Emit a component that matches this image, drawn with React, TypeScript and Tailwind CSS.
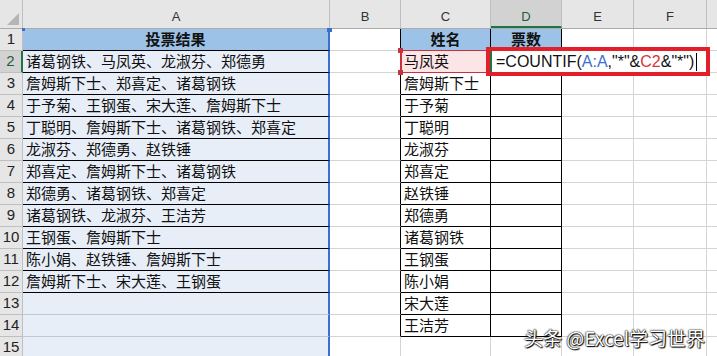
import React from 'react';

const votes = [
  '诸葛钢铁、马凤英、龙淑芬、郑德勇',
  '詹姆斯下士、郑喜定、诸葛钢铁',
  '于予菊、王钢蛋、宋大莲、詹姆斯下士',
  '丁聪明、詹姆斯下士、诸葛钢铁、郑喜定',
  '龙淑芬、郑德勇、赵铁锤',
  '郑喜定、詹姆斯下士、诸葛钢铁',
  '郑德勇、诸葛钢铁、郑喜定',
  '诸葛钢铁、龙淑芬、王洁芳',
  '王钢蛋、詹姆斯下士',
  '陈小娟、赵铁锤、詹姆斯下士',
  '詹姆斯下士、宋大莲、王钢蛋',
];

const names = [
  '马凤英', '詹姆斯下士', '于予菊', '丁聪明', '龙淑芬', '郑喜定', '赵铁锤',
  '郑德勇', '诸葛钢铁', '王钢蛋', '陈小娟', '宋大莲', '王洁芳',
];

const cjk = "font-['Noto_Sans_CJK_SC',sans-serif]";
const latin = "font-['Liberation_Sans',Arial,sans-serif]";

const App = () => {
  const rows = Array.from({ length: 15 }, (_, i) => i + 1);

  return (
    <div className="relative w-[717px] h-[356px] overflow-hidden bg-white">
      {/* column headers */}
      <div className={`flex h-[29px] bg-[#e6e6e6] border-b border-[#ababab] ${latin} text-[13px] text-[#333]`}>
        <div className="w-[23px] shrink-0 border-r border-[#bfbfbf] flex items-end justify-end pr-[3px] pb-[3px]">
          <svg width="12" height="12" viewBox="0 0 12 12">
            <polygon points="12,0 12,12 0,12" fill="#b5b5b5" />
          </svg>
        </div>
        <div className="w-[307px] shrink-0 border-r border-[#bfbfbf] flex items-end justify-center pb-[2px]">A</div>
        <div className="w-[71px] shrink-0 border-r border-[#bfbfbf] flex items-end justify-center pb-[2px]">B</div>
        <div className="w-[90px] shrink-0 border-r border-[#bfbfbf] flex items-end justify-center pb-[2px]">C</div>
        <div className="w-[71px] shrink-0 border-r border-[#bfbfbf] bg-[#d2d2d2] border-b-2 border-b-[#217346] flex items-end justify-center text-[#1e5e3a]">D</div>
        <div className="w-[72px] shrink-0 border-r border-[#bfbfbf] flex items-end justify-center pb-[2px]">E</div>
        <div className="w-[73px] shrink-0 border-r border-[#bfbfbf] flex items-end justify-center pb-[2px]">F</div>
        <div className="flex-1" />
      </div>

      {/* grid rows */}
      {rows.map((r) => {
        const inTable = r <= 14;
        return (
          <div key={r} className={`flex h-[22px] ${cjk} text-[15px] text-[#111]`}>
            <div
              className={`w-[23px] shrink-0 border-b border-[#bfbfbf] flex items-center justify-center ${latin} text-[15px] ${
                r === 2
                  ? 'bg-[#d2d2d2] border-r-2 border-r-[#217346] text-[#1e5e3a]'
                  : 'bg-[#e6e6e6] border-r border-r-[#bfbfbf] text-[#222]'
              }`}
            >
              {r}
            </div>
            <div
              className={`w-[307px] shrink-0 border-r-2 border-r-[#3b6fcf] border-b flex items-center ${
                r <= 12 ? 'border-b-black' : 'border-b-[#c3c8d0]'
              } ${r === 1 ? 'bg-[#9cc3e7] justify-center font-bold' : 'bg-[#e8eef8] pl-[3px]'}`}
            >
              {r === 1 ? '投票结果' : votes[r - 2] ?? ''}
            </div>
            <div
              className={`w-[71px] shrink-0 border-b border-b-[#d4d4d4] border-r ${
                inTable ? 'border-r-black' : 'border-r-[#d4d4d4]'
              }`}
            />
            <div
              className={`w-[90px] shrink-0 border-r border-b flex items-center ${
                inTable ? 'border-black' : 'border-[#d4d4d4]'
              } ${r === 1 ? 'bg-[#9cc3e7] justify-center font-bold' : r === 2 ? 'bg-[#fbe5e6] pl-[3px]' : 'pl-[3px]'}`}
            >
              {r === 1 ? '姓名' : names[r - 2] ?? ''}
            </div>
            <div
              className={`w-[71px] shrink-0 border-r border-b flex items-center justify-center ${
                inTable ? 'border-black' : 'border-[#d4d4d4]'
              } ${r === 1 ? 'bg-[#9cc3e7] font-bold' : ''}`}
            >
              {r === 1 ? '票数' : ''}
            </div>
            <div className="w-[72px] shrink-0 border-r border-b border-[#d4d4d4]" />
            <div className="w-[73px] shrink-0 border-r border-b border-[#d4d4d4]" />
            <div className="flex-1 border-b border-[#d4d4d4]" />
          </div>
        );
      })}

      {/* selection handles of column A */}
      <div className="absolute left-[22px] top-[28px] w-[3px] h-[3px] bg-[#3b6fcf]" />
      <div className="absolute left-[327px] top-[28px] w-[5px] h-[4px] bg-[#3b6fcf]" />

      {/* C2 reference highlight */}
      <div className="absolute left-[400px] top-[50px] w-[92px] h-[23px] border-l-2 border-y border-[#c8323f]" />
      <div className="absolute left-[398px] top-[48px] w-[5px] h-[5px] bg-[#c8323f]" />
      <div className="absolute left-[398px] top-[70px] w-[5px] h-[5px] bg-[#c8323f]" />

      {/* formula being typed in D2 */}
      <div className="absolute left-[486px] top-[47px] w-[224px] h-[29px] border-4 border-[#e3202a] bg-white">
        <div className={`h-full border-l-2 border-[#217346] flex items-center pl-[4px] ${latin} text-[16px] text-[#111] whitespace-nowrap`}>
          <span>=COUNTIF(</span>
          <span className="text-[#3b6fcf]">A:A</span>
          <span>,"*"&amp;</span>
          <span className="text-[#d9343c]">C2</span>
          <span>&amp;"*")</span>
          <span className="ml-[2px] w-px h-[18px] bg-black" />
        </div>
      </div>

      {/* watermark */}
      <div
        className={`absolute left-[524px] top-[324px] ${cjk} text-[19px] text-white [text-shadow:0_0_2px_#000,0_0_1px_#000,1px_1px_1px_#000]`}
      >
        头条 @Excel学习世界
      </div>
    </div>
  );
};

export default App;
